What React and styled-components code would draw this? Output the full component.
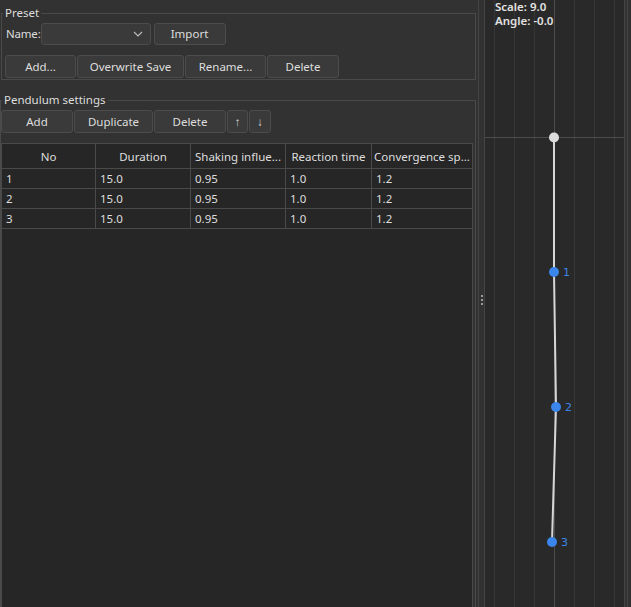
import React from "react";
import styled, { createGlobalStyle } from "styled-components";

const Global = createGlobalStyle`
  html, body { margin: 0; padding: 0; background: #323232; }
  body { font-family: "Segoe UI", "Noto Sans", "Open Sans", sans-serif; font-size: 11.5px; color: #dedede; }
  * { box-sizing: border-box; }
`;

const Window = styled.div`
  display: flex;
  width: 631px;
  height: 607px;
  overflow: hidden;
  background: #323232;
`;

const LeftPanel = styled.div`
  width: 476px;
  flex: none;
  display: flex;
  flex-direction: column;
`;

const Group = styled.fieldset`
  margin: ${(p) => p.$mt}px 0 ${(p) => p.$mb || 0}px ${(p) => p.$ml}px;
  width: ${(p) => 476 - p.$ml}px;
  padding: 0;
  border: 1px solid #4a4a4a;
  border-radius: 0;
  min-width: 0;
  display: flex;
  flex-direction: column;
  flex: ${(p) => (p.$grow ? "1" : "none")};
`;

const Legend = styled.legend`
  padding: 0 2px;
  margin-left: 1px;
  line-height: 16px;
  height: 16px;
  font-size: 11.5px;
  color: #dedede;
`;

const Row = styled.div`
  display: flex;
  align-items: center;
  gap: ${(p) => p.$gap ?? 1}px;
  margin: ${(p) => p.$m};
  height: ${(p) => p.$h}px;
  flex: none;
`;

const Label = styled.span`
  line-height: 22px;
  letter-spacing: -0.2px;
`;

const Button = styled.button`
  width: ${(p) => p.$w}px;
  height: 100%;
  flex: none;
  padding: 0;
  margin-left: ${(p) => p.$ml || 0}px;
  background: #3a3a3a;
  border: 1px solid #4c4c4c;
  border-radius: 3px;
  color: #dedede;
  font-family: inherit;
  font-size: 11.5px;
  line-height: 1;
  text-align: center;
`;

const Combo = styled.div`
  width: 110px;
  height: 100%;
  flex: none;
  background: #3a3a3a;
  border: 1px solid #4c4c4c;
  border-radius: 3px;
  display: flex;
  align-items: center;
  justify-content: flex-end;
  padding-right: 7px;
`;

const Table = styled.div`
  flex: 1;
  margin: 10px 0 0 0;
  width: 472px;
  background: #262626;
  border: 1px solid #4a4a4a;
  border-bottom: none;
  display: grid;
  grid-template-columns: 94px 95px 95px 86px 100px;
  grid-auto-rows: 20px;
  grid-template-rows: 25px;
  align-content: start;
`;

const Cell = styled.div`
  border-right: ${(p) => (p.$last ? "none" : "1px solid #4a4a4a")};
  border-bottom: 1px solid #4a4a4a;
  padding: 0 ${(p) => (p.$head ? 2 : 4)}px;
  display: flex;
  align-items: center;
  justify-content: ${(p) => (p.$head ? "center" : "flex-start")};
  white-space: nowrap;
  overflow: hidden;
  color: #dedede;
  font-size: 11.5px;
`;

const Splitter = styled.div`
  width: 8px;
  flex: none;
  display: flex;
  align-items: center;
  padding-left: 5px;
  background: linear-gradient(to right, transparent 2px, #444 2px, #444 3px, transparent 3px);
`;

const Dots = styled.div`
  display: flex;
  flex-direction: column;
  gap: 2px;
  margin-top: -8px;
`;

const Dot = styled.span`
  width: 2px;
  height: 2px;
  background: #9a9a9a;
`;

const Canvas = styled.div`
  position: relative;
  width: 141px;
  flex: none;
  height: 100%;
  background: #292929;
  border-left: 1px solid #444;
  border-right: 1px solid #444;
`;

const Info = styled.div`
  position: absolute;
  left: 10px;
  top: 0;
  line-height: 14px;
  font-size: 11.5px;
  font-weight: 600;
  color: #e2e2e2;
`;

const Gutter = styled.div`
  flex: 1;
  background: linear-gradient(to right, transparent 2px, #444 2px, #444 3px, transparent 3px);
`;

const headers = ["No", "Duration", "Shaking influe...", "Reaction time", "Convergence sp..."];
const rows = [
  ["1", "15.0", "0.95", "1.0", "1.2"],
  ["2", "15.0", "0.95", "1.0", "1.2"],
  ["3", "15.0", "0.95", "1.0", "1.2"],
];

const nodes = [
  { x: 69, y: 272, n: "1" },
  { x: 71, y: 407, n: "2" },
  { x: 67, y: 542, n: "3" },
];

function PendulumView() {
  const grid = [9, 29, 49, 89, 109, 129];
  const pts = [[69, 137], ...nodes.map((d) => [d.x, d.y])].map((p) => p.join(",")).join(" ");
  return (
    <svg width="139" height="607" style={{ display: "block" }}>
      {grid.map((x) => (
        <line key={x} x1={x + 0.5} y1="0" x2={x + 0.5} y2="607" stroke="#373737" strokeWidth="1" />
      ))}
      <line x1="69.5" y1="0" x2="69.5" y2="607" stroke="#4c4c4c" strokeWidth="1" />
      <line x1="0" y1="137.5" x2="139" y2="137.5" stroke="#4c4c4c" strokeWidth="1" />
      <polyline points={pts} fill="none" stroke="#d6d6d6" strokeWidth="2" />
      <circle cx="69" cy="137.5" r="5" fill="#dcdcdc" />
      {nodes.map((d) => (
        <g key={d.n}>
          <circle cx={d.x} cy={d.y} r="5" fill="#3b86ea" />
          <text x={d.x + 9} y={d.y + 4} fill="#3b86ea" fontSize="11" fontFamily="DejaVu Sans, sans-serif">
            {d.n}
          </text>
        </g>
      ))}
    </svg>
  );
}

export default function App() {
  return (
    <>
      <Global />
      <Window>
        <LeftPanel>
          <Group $mt={5} $ml={1}>
            <Legend>Preset</Legend>
            <Row $m="2px 0 0 4px" $h={22} $gap={0}>
              <Label>Name:</Label>
              <Combo>
                <svg width="10" height="6" viewBox="0 0 10 6">
                  <path d="M1 1 L5 5 L9 1" fill="none" stroke="#bdbdbd" strokeWidth="1.1" />
                </svg>
              </Combo>
              <Button $w={72} $ml={3}>Import</Button>
            </Row>
            <Row $m="10px 0 1px 3px" $h={23}>
              <Button $w={71}>Add...</Button>
              <Button $w={107}>Overwrite Save</Button>
              <Button $w={81}>Rename...</Button>
              <Button $w={72}>Delete</Button>
            </Row>
          </Group>
          <Group $mt={12} $ml={0} $mb={-4} $grow>
            <Legend>Pendulum settings</Legend>
            <Row $m="2px 0 0 0" $h={23}>
              <Button $w={72}>Add</Button>
              <Button $w={79}>Duplicate</Button>
              <Button $w={72}>Delete</Button>
              <Button $w={21}>↑</Button>
              <Button $w={22}>↓</Button>
            </Row>
            <Table>
              {headers.map((h, i) => (
                <Cell key={h} $head $last={i === 4}>{h}</Cell>
              ))}
              {rows.map((r, ri) =>
                r.map((v, i) => (
                  <Cell key={ri + "-" + i} $last={i === 4}>{v}</Cell>
                ))
              )}
            </Table>
          </Group>
        </LeftPanel>
        <Splitter>
          <Dots>
            <Dot />
            <Dot />
            <Dot />
          </Dots>
        </Splitter>
        <Canvas>
          <PendulumView />
          <Info>
            <div>Scale: 9.0</div>
            <div>Angle: -0.0</div>
          </Info>
        </Canvas>
        <Gutter />
      </Window>
    </>
  );
}
